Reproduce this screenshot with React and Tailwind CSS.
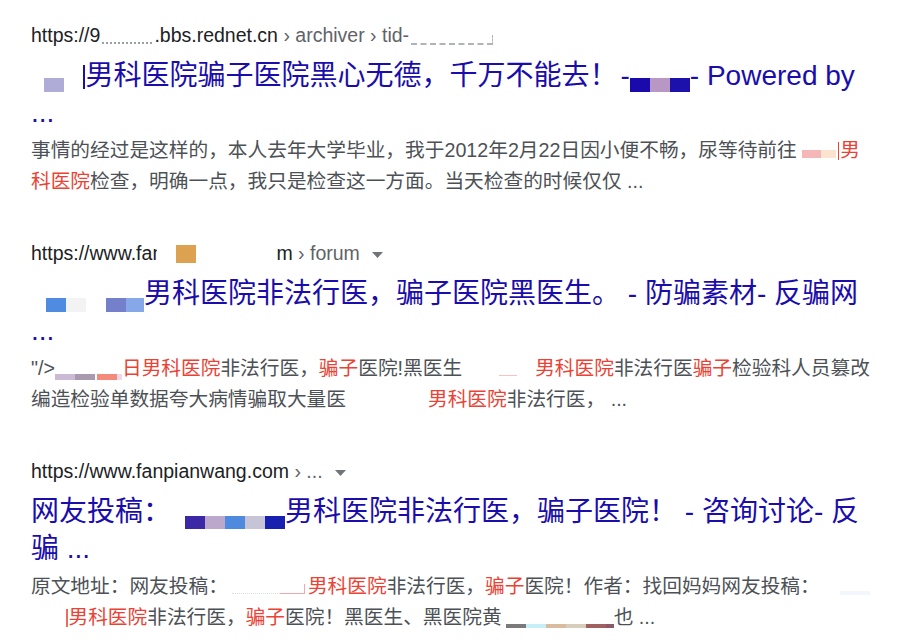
import React from 'react'

// mosaic blocks that stand in for the blurred parts of the screenshot
const Px = ({ cells, h = 'h-[14px]', v = 'align-[-7px]', className = '' }) => (
    <span className={`inline-flex ${h} ${v} ${className}`}>
        {cells.map(([bg, w], i) => (
            <span key={i} className={`${bg} ${w} h-full`}></span>
        ))}
    </span>
)

const Caret = () => (
    <svg className="inline-block ml-[12px] align-[2px]" width="11" height="6" viewBox="0 0 11 6">
        <path d="M0 0h11L5.5 6z" fill="#70757a" />
    </svg>
)

const Bar = ({ color, className }) => (
    <span className={`inline-block w-[1.5px] ${color} ${className}`}></span>
)

const Red = ({ children }) => <span className="text-[#ea4335]">{children}</span>

const Result = ({ url, title, snippet }) => (
    <div className="mb-[42.5px]">
        <div className="h-[28px] leading-[28px] text-[19.5px] text-[#202124] whitespace-nowrap">{url}</div>
        <div className="mt-[7.5px] text-[28px] leading-[37px] text-[#1a0dab]">
            {title.map((line, i) => (
                <div key={i} className="whitespace-nowrap">{line}</div>
            ))}
        </div>
        <div className="mt-[4px] text-[19.7px] leading-[31px] text-[#4d5156]">
            {snippet.map((line, i) => (
                <div key={i} className="whitespace-nowrap">{line}</div>
            ))}
        </div>
    </div>
)

export default function App() {
    return (
        <div className="w-[900px] h-[644px] overflow-hidden bg-white pt-[21px] pl-[31px] font-['Liberation_Sans','Noto_Sans_CJK_SC',sans-serif]">
            <Result
                url={<>
                    https://9
                    <span className="inline-block w-[50px] h-[3px] border-b-2 border-dotted border-[#9aa0a6] align-[-2px] mx-[2px]"></span>
                    .bbs.rednet.cn
                    <span className="text-[#5f6368]"> › archiver › tid-</span>
                    <span className="inline-block w-[82px] h-[10px] border-b-2 border-r border-dashed border-[#b0b4b8] align-[-3px] ml-[2px]"></span>
                </>}
                title={[
                    <>
                        <Px cells={[['bg-[#b0acd8]', 'w-[20px]']]} className="ml-[13px]" />
                        <Bar color="bg-[#1a0dab]" className="h-[24px] align-[-4px] ml-[19px] mr-[1px]" />
                        男科医院骗子医院黑心无德，千万不能去！<span className="ml-[3px]">-</span>
                        <Px cells={[['bg-[#1a0aab]', 'w-[20px]'], ['bg-[#b997c4]', 'w-[20px]'], ['bg-[#1c12ab]', 'w-[20px]']]} />
                        - Powered by
                    </>,
                    '...',
                ]}
                snippet={[
                    <>
                        事情的经过是这样的，本人去年大学毕业，我于2012年2月22日因小便不畅，尿等待前往
                        <Px cells={[['bg-[#f4b6b6]', 'w-[19px]'], ['bg-[#fbe3cf]', 'w-[15px]']]} h="h-[8px]" v="align-[-1px]" className="ml-[5px]" />
                        <Bar color="bg-[#ea4335]" className="h-[18px] align-[-3px] ml-[2px] mr-[1px]" />
                        <Red>男</Red>
                    </>,
                    <>
                        <Red>科医院</Red>检查，明确一点，我只是检查这一方面。当天检查的时候仅仅 ...
                    </>,
                ]}
            />
            <Result
                url={<>
                    https://www.fa
                    <span className="inline-block w-[5px] overflow-hidden align-top">n</span>
                    <Px cells={[['bg-[#dca252]', 'w-[20px]']]} h="h-[18px]" v="align-[-3px]" className="ml-[19px]" />
                    <span className="ml-[80px]">m</span>
                    <span className="text-[#5f6368]"> › forum</span>
                    <Caret />
                </>}
                title={[
                    <>
                        <Px cells={[['bg-[#4f8be0]', 'w-[20px]'], ['bg-[#f3f3f3]', 'w-[20px]'], ['bg-white', 'w-[20px]'], ['bg-[#7580cc]', 'w-[20px]'], ['bg-[#86a7e8]', 'w-[18px]']]} v="align-[-9px]" className="ml-[15px]" />
                        男科医院非法行医，骗子医院黑医生。 - 防骗素材- 反骗网
                    </>,
                    '...',
                ]}
                snippet={[
                    <>
                        "/&gt;
                        <Px cells={[['bg-[#cbbad6]', 'w-[20px]'], ['bg-[#a99ab0]', 'w-[20px]'], ['bg-white', 'w-[2px]'], ['bg-[#f28b7a]', 'w-[20px]'], ['bg-[#f0d8ea]', 'w-[5px]']]} h="h-[6px]" v="align-[-5px]" />
                        <Red>日男科医院</Red>非法行医，<Red>骗子</Red>医院!黑医生
                        <span className="inline-block w-[18px] h-px bg-[#f7c2c0] ml-[37px] mr-[18px] align-[-1px]"></span>
                        <Red>男科医院</Red>非法行医<Red>骗子</Red>检验科人员篡改
                    </>,
                    <>
                        编造检验单数据夸大病情骗取大量医
                        <span className="inline-block w-[82px]"></span>
                        <Red>男科医院</Red>非法行医， ...
                    </>,
                ]}
            />
            <Result
                url={<>
                    https://www.fanpianwang.com
                    <span className="text-[#5f6368]"> › ...</span>
                    <Caret />
                </>}
                title={[
                    <>
                        网友投稿：
                        <Px cells={[['bg-[#3c27a6]', 'w-[20px]'], ['bg-[#bca8cc]', 'w-[20px]'], ['bg-[#4f8ade]', 'w-[20px]'], ['bg-[#c8c4d8]', 'w-[20px]'], ['bg-[#1820b0]', 'w-[20px]']]} h="h-[13px]" v="align-[-8px]" className="ml-[14px]" />
                        男科医院非法行医，骗子医院！ - 咨询讨论- 反
                    </>,
                    '骗 ...',
                ]}
                snippet={[
                    <>
                        原文地址：网友投稿：
                        <span className="inline-block w-[48px] h-[3px] border-b border-dotted border-[#d8dde8] align-[-1px] ml-[4px]"></span>
                        <span className="inline-block w-[25px] h-[10px] border-b border-r border-[#f2a8a8] align-[-1px]"></span>
                        <span className="ml-[3px]"><Red>男科医院</Red></span>非法行医，<Red>骗子</Red>医院！作者：找回妈妈网友投稿：
                        <span className="inline-block w-[30px] h-[4px] bg-[#f3f6fa] ml-[20px] align-[-2px]"></span>
                    </>,
                    <>
                        <Bar color="bg-[#f06a60]" className="h-[18px] align-[-3px] ml-[35px] mr-[1px]" />
                        <Red>男科医院</Red>非法行医，<Red>骗子</Red>医院！黑医生、黑医院黄
                        <Px cells={[['bg-[#7a7a7a]', 'w-[20px]'], ['bg-[#c8eef8]', 'w-[20px]'], ['bg-[#d8bca0]', 'w-[20px]'], ['bg-[#d8cdb8]', 'w-[20px]'], ['bg-[#a06060]', 'w-[20px]'], ['bg-[#8a5a6a]', 'w-[8px]']]} h="h-[4px]" v="align-[-4px]" className="ml-[4px]" />
                        也 ...
                    </>,
                ]}
            />
        </div>
    )
}
